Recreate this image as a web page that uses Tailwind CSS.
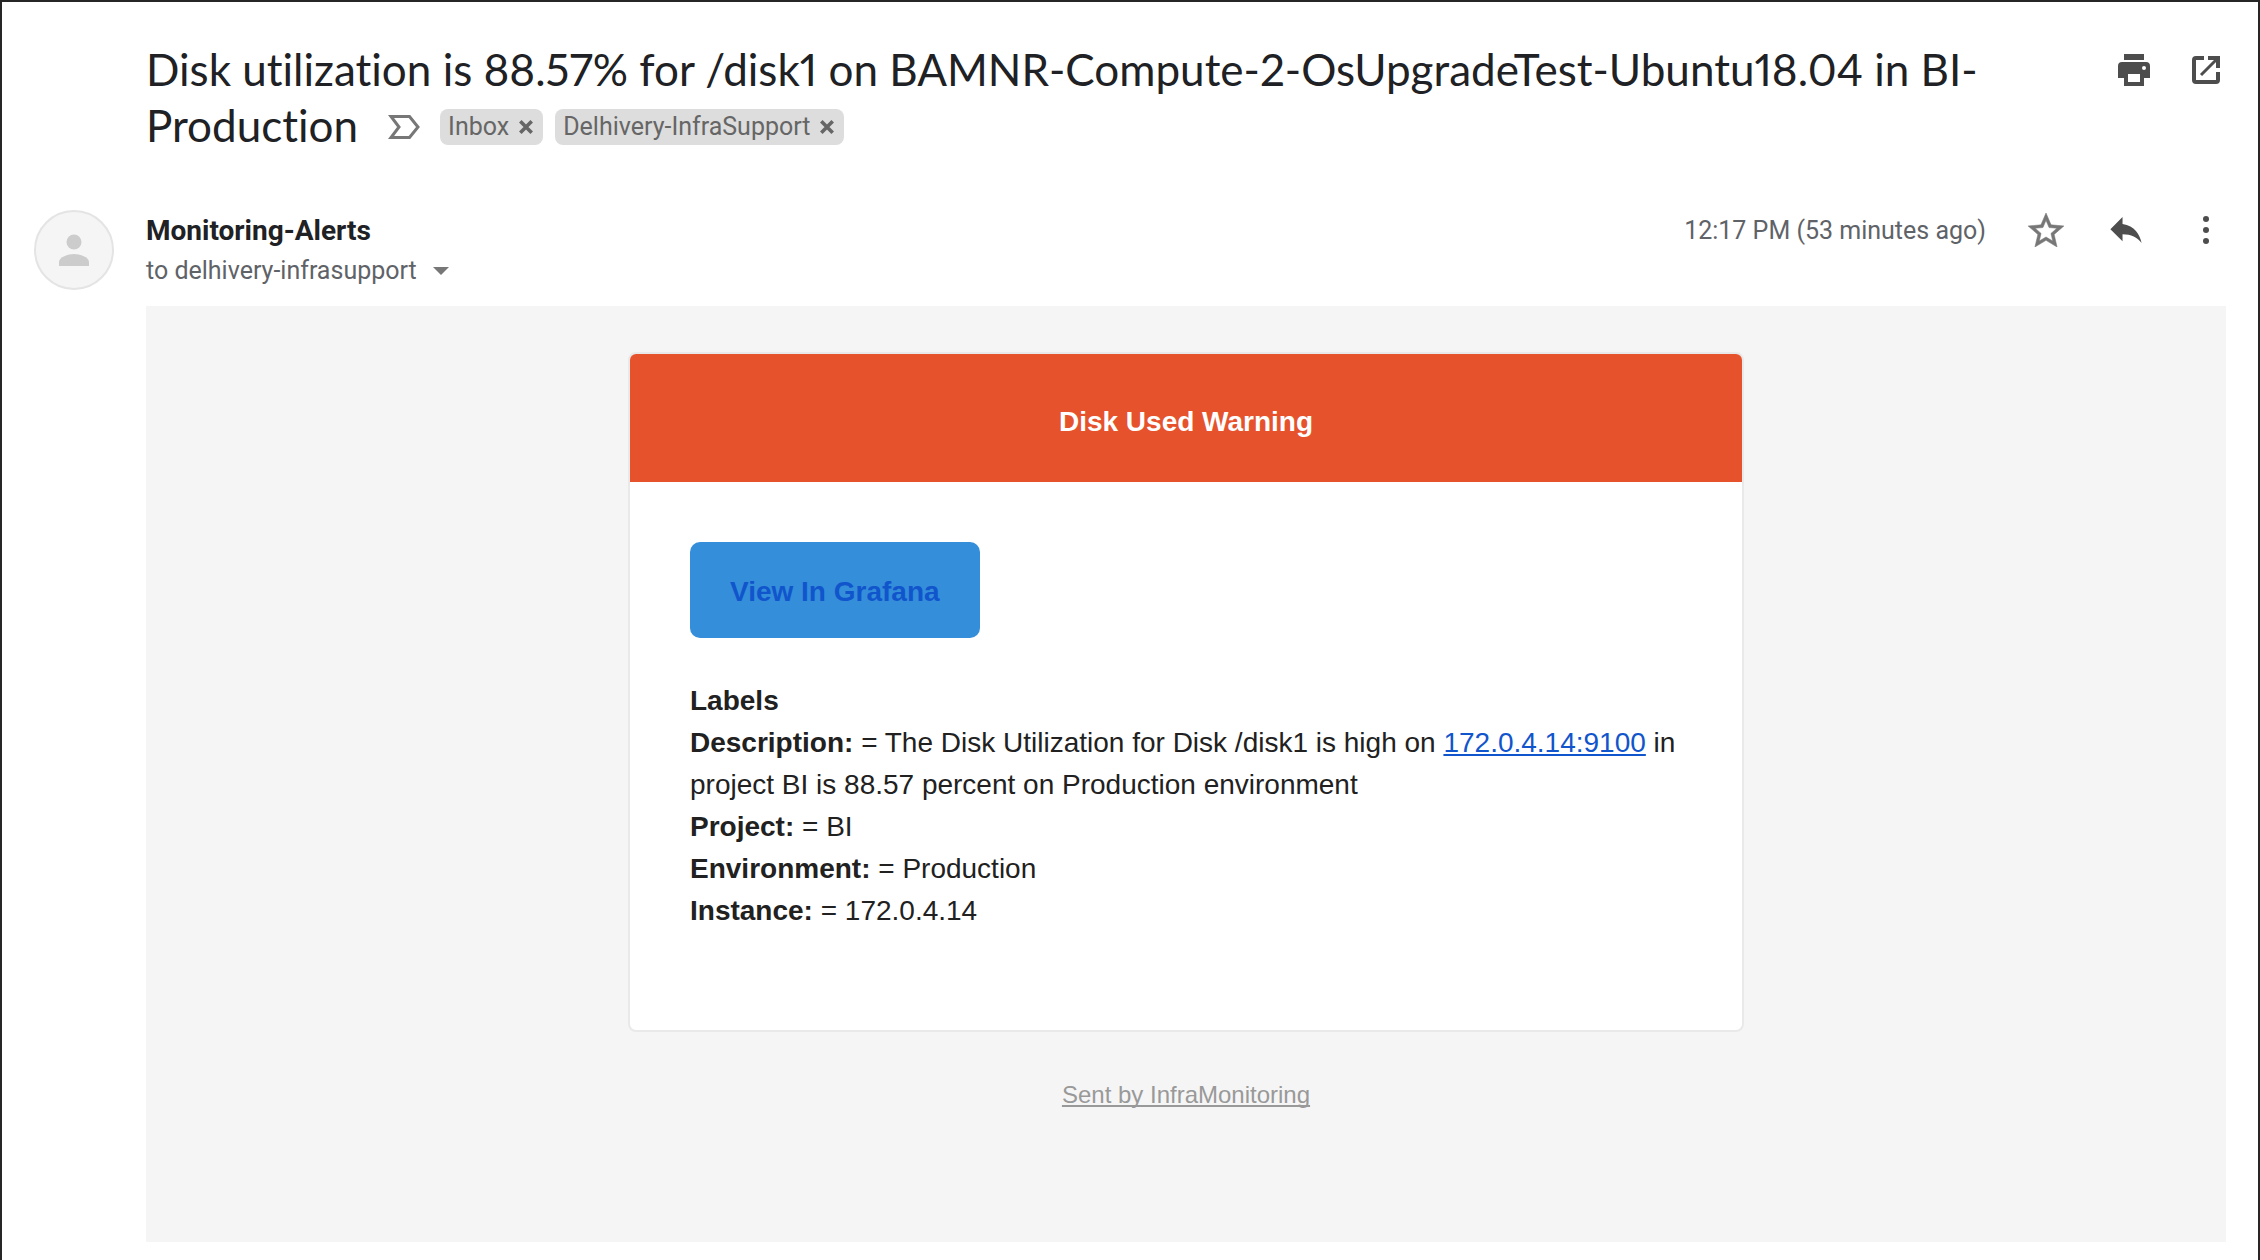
<!DOCTYPE html>
<html lang="en">
<head>
<meta charset="utf-8">
<title>Disk utilization alert</title>
<script src="https://cdn.jsdelivr.net/npm/@tailwindcss/browser@4"></script>
</head>
<body class="bg-white">
<main class="flex min-h-screen flex-col border-x-2 border-t-2 border-[#262626] pb-[18px] pr-8 font-['Roboto',sans-serif] text-[#5f6368]">

  <header class="flex items-start gap-9 pl-36 pt-[39px]">
    <h1 class="min-w-0 flex-1 font-['Lato',sans-serif] text-[44px] leading-14 text-[#202124] proportional-nums [font-variant-ligatures:none]">Disk utilization is 88.57% for /disk1 on BAMNR-Compute-2-OsUpgradeTest-Ubuntu18.04 in BI-<wbr>Production<span class="ml-[30px] inline-flex h-14 items-center pt-1 align-top font-['Roboto',sans-serif] text-[25px] leading-9 text-[#666]">
        <button type="button" aria-label="Importance marker" class="mr-5">
          <svg class="block h-6 w-8" viewBox="0 0 32 24" fill="none" stroke="#777" stroke-width="3"><path d="M3 1.5H21.5L30 12 21.5 22.500H3L11 12Z"/></svg>
        </button>
        <span class="mr-3 flex h-9 items-center gap-[10px] rounded-lg bg-[#ddd] pl-2 pr-2.5">Inbox
          <button type="button" aria-label="Remove label Inbox"><svg class="block size-[14px]" viewBox="0 0 14 14" stroke="#666" stroke-width="3.600"><path d="M1.300 1.300 12.700 12.700M12.700 1.300 1.300 12.700"/></svg></button>
        </span>
        <span class="flex h-9 items-center gap-[10px] rounded-lg bg-[#ddd] pl-2 pr-2.5">Delhivery-InfraSupport
          <button type="button" aria-label="Remove label Delhivery-InfraSupport"><svg class="block size-[14px]" viewBox="0 0 14 14" stroke="#666" stroke-width="3.600"><path d="M1.300 1.300 12.700 12.700M12.700 1.300 1.300 12.700"/></svg></button>
        </span>
      </span></h1>
    <div class="flex gap-8 pt-[9px] text-[#4d4d4d]">
      <button type="button" aria-label="Print all" class="flex size-10 items-center justify-center">
        <svg class="size-8" viewBox="0 0 16 16" fill="currentColor" fill-rule="evenodd"><path d="M3 0H13V3H3ZM2 4H14A2 2 0 0 1 16 6V12H13V16H3V12H0V6A2 2 0 0 1 2 4ZM5 10V14H11V10ZM13 6A1 1 0 1 0 13 8 1 1 0 0 0 13 6Z"/></svg>
      </button>
      <button type="button" aria-label="Open in new window" class="flex size-10 items-center justify-center">
        <svg class="size-7" viewBox="0 0 14 14" fill="none" stroke="currentColor" stroke-width="2"><path d="M6 1H2A1 1 0 0 0 1 2V12A1 1 0 0 0 2 13H12A1 1 0 0 0 13 12V8M8 1H13V6"/><path d="M4.500 9.500 13 1" stroke-width="1.500"/></svg>
      </button>
    </div>
  </header>

  <section class="mt-[57px] flex gap-8 pl-8">
    <div class="flex size-20 shrink-0 items-center justify-center rounded-full border-2 border-[#e4e4e4] bg-[#f5f5f5]">
      <svg class="h-8 w-[30px]" viewBox="0 0 30 32" fill="#ccc"><circle cx="15" cy="8" r="7.500"/><path d="M0 32V28C0 23 9 20 15 20S30 23 30 28V32Z"/></svg>
    </div>
    <div class="min-w-0 flex-1 pt-px">
      <h2 class="text-[28px] font-bold leading-10 text-[#202124]">Monitoring-Alerts</h2>
      <div class="flex items-center gap-4 text-[25px] leading-10">
        <span>to delhivery-infrasupport</span>
        <button type="button" aria-label="Show details"><svg class="block h-2 w-4" viewBox="0 0 16 8" fill="#777"><path d="M0 0H16L8 8Z"/></svg></button>
      </div>
    </div>
    <div class="flex h-10 items-center gap-10 text-[#4d4d4d]">
      <time class="pt-0.5 text-[25px] leading-10 text-[#5f6368]">12:17 PM (53 minutes ago)</time>
      <button type="button" aria-label="Star" class="flex size-10 items-center justify-center text-[#777]">
        <svg class="h-[34px] w-9" viewBox="2 2 20 19" fill="currentColor" stroke="currentColor" stroke-width="0.300"><path d="M22 9.240l-7.190-.620L12 2 9.190 8.630 2 9.240l5.460 4.730L5.820 21 12 17.270 18.180 21l-1.630-7.030L22 9.240zM12 15.400l-3.760 2.270 1-4.280-3.320-2.880 4.380-.380L12 6.100l1.710 4.040 4.380.380-3.320 2.880 1 4.280L12 15.400z"/></svg>
      </button>
      <button type="button" aria-label="Reply" class="flex size-10 items-center justify-center">
        <svg class="h-[26px] w-8" viewBox="3 5 18 15" fill="currentColor"><path d="M10 9V5l-7 7 7 7v-4.100c5 0 8.500 1.600 11 5.100-1-5-4-10-11-11z"/></svg>
      </button>
      <button type="button" aria-label="More" class="flex size-10 items-center justify-center">
        <svg class="h-7 w-2" viewBox="0 0 8 28" fill="currentColor"><circle cx="4" cy="3" r="3"/><circle cx="4" cy="14" r="3"/><circle cx="4" cy="25" r="3"/></svg>
      </button>
    </div>
  </section>

  <article class="ml-36 mt-[15px] flex flex-1 flex-col items-center bg-[#f5f5f5] pt-[46px] font-['Liberation_Sans',Arial,sans-serif] text-[28px] leading-[42px] text-[#212121]">
    <div class="w-full max-w-[1116px] overflow-hidden rounded-lg border-2 border-[#e9e9e9] bg-white">
      <h3 class="flex h-32 items-center justify-center bg-[#e6522c] pt-2 font-bold text-white">Disk Used Warning</h3>
      <div class="px-15 pb-[98px] pt-15">
        <a href="#" class="flex h-24 w-fit items-center rounded-[10px] bg-[#348eda] px-10 pt-1 font-bold text-[#1155cc]">View In Grafana</a>
        <div class="mt-[42px]">
          <p class="font-bold">Labels</p>
          <p><b>Description:</b> = The Disk Utilization for Disk /disk1 is high on <a href="#" class="text-[#1155cc] underline">172.0.4.14:9100</a> in project BI is 88.57 percent on Production environment</p>
          <p><b>Project:</b> = BI</p>
          <p><b>Environment:</b> = Production</p>
          <p><b>Instance:</b> = 172.0.4.14</p>
        </div>
      </div>
    </div>
    <a href="#" class="mt-[45px] text-2xl leading-9 text-[#999] underline [text-decoration-skip-ink:none]">Sent by InfraMonitoring</a>
  </article>
</main>
</body>
</html>
